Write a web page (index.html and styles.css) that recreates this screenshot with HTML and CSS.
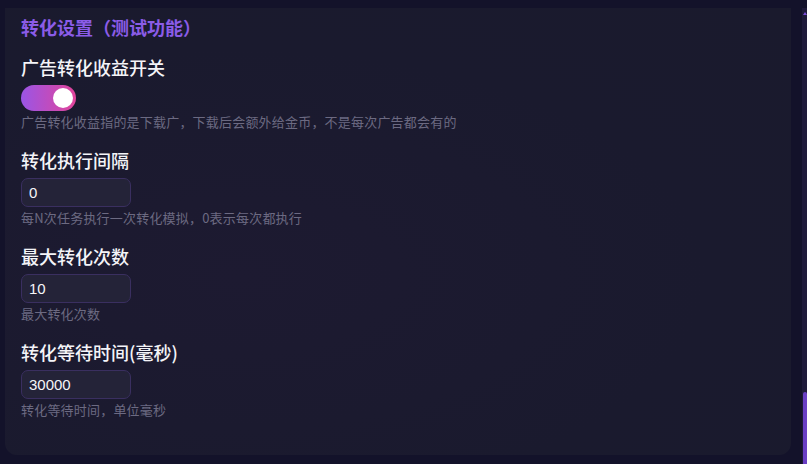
FILE: index.html
```html
<!DOCTYPE html>
<html lang="zh-CN">
<head>
<meta charset="utf-8">
<title>转化设置</title>
<link rel="stylesheet" href="styles.css">
</head>
<body>
<div class="viewport">
  <main class="content">
    <section class="card">
      <h2 class="card-title">转化设置（测试功能）</h2>

      <div class="field">
        <label class="field-label">广告转化收益开关</label>
        <div class="toggle on"><span class="knob"></span></div>
        <p class="field-desc">广告转化收益指的是下载广，下载后会额外给金币，不是每次广告都会有的</p>
      </div>

      <div class="field">
        <label class="field-label">转化执行间隔</label>
        <input class="field-input" type="text" value="0">
        <p class="field-desc">每N次任务执行一次转化模拟，0表示每次都执行</p>
      </div>

      <div class="field">
        <label class="field-label">最大转化次数</label>
        <input class="field-input" type="text" value="10">
        <p class="field-desc">最大转化次数</p>
      </div>

      <div class="field">
        <label class="field-label">转化等待时间(毫秒)</label>
        <input class="field-input" type="text" value="30000">
        <p class="field-desc">转化等待时间，单位毫秒</p>
      </div>
    </section>
  </main>
  <div class="scrollbar">
    <span class="scroll-arrow"></span>
    <span class="scroll-thumb"></span>
  </div>
</div>
</body>
</html>
```

FILE: styles.css
```css
* { box-sizing: border-box; }
html, body {
  margin: 0;
  height: 100%;
  background: #13122a;
  overflow: hidden;
}
body {
  font-family: "Noto Sans CJK SC", "Liberation Sans", sans-serif;
  color: #f0f0f5;
}
.viewport {
  display: flex;
  height: 464px;
  padding-top: 8px;
}
.content {
  flex: 1;
  padding-left: 5px;
  padding-right: 11px;
}
.card {
  background: radial-gradient(ellipse at 30% 60%, #1d1a31 0%, #1a1a2e 60%, #1a1a2d 100%);
  border-radius: 0 0 12px 12px;
  padding: 6px 16px 36px 16px;
  height: 447px;
}
.card-title {
  margin: 0 0 16px 0;
  font-size: 18px;
  line-height: 26px;
  font-weight: 700;
  color: #8b5ce8;
}
.field { margin-bottom: 20px; }
.field:last-child { margin-bottom: 0; }
.field-label {
  display: block;
  font-size: 18px;
  line-height: 22px;
  font-weight: 500;
  margin-bottom: 7px;
  color: #f4f4f8;
}
.toggle {
  width: 55px;
  height: 26px;
  border-radius: 13px;
  background: linear-gradient(90deg, #9a55e6 0%, #e2449a 100%);
  position: relative;
}
.knob {
  position: absolute;
  top: 3px;
  right: 3px;
  width: 20px;
  height: 20px;
  border-radius: 50%;
  background: #ffffff;
}
.field-input {
  display: block;
  width: 110px;
  height: 29px;
  border: 1px solid #3a2f60;
  border-radius: 7px;
  background: #242338;
  color: #f5f5f8;
  font-family: "Liberation Sans", "Noto Sans CJK SC", sans-serif;
  font-size: 15px;
  padding: 0 7px;
  outline: none;
}
.field-desc {
  margin: 4px 0 0 0;
  font-size: 13px;
  line-height: 14px;
  letter-spacing: 0.2px;
  color: #6c6a82;
}
.scrollbar {
  width: 5px;
  background: #1e1a3a;
  position: relative;
}
.scroll-arrow {
  position: absolute;
  top: 4px;
  left: 1px;
  width: 0;
  height: 0;
  border-left: 2px solid transparent;
  border-right: 2px solid transparent;
  border-bottom: 3px solid #7a4fd6;
}
.scroll-thumb {
  position: absolute;
  left: 1px;
  right: 0;
  top: 384px;
  bottom: 0;
  background: #6a3fc4;
  border-radius: 2px 2px 0 0;
}
```
